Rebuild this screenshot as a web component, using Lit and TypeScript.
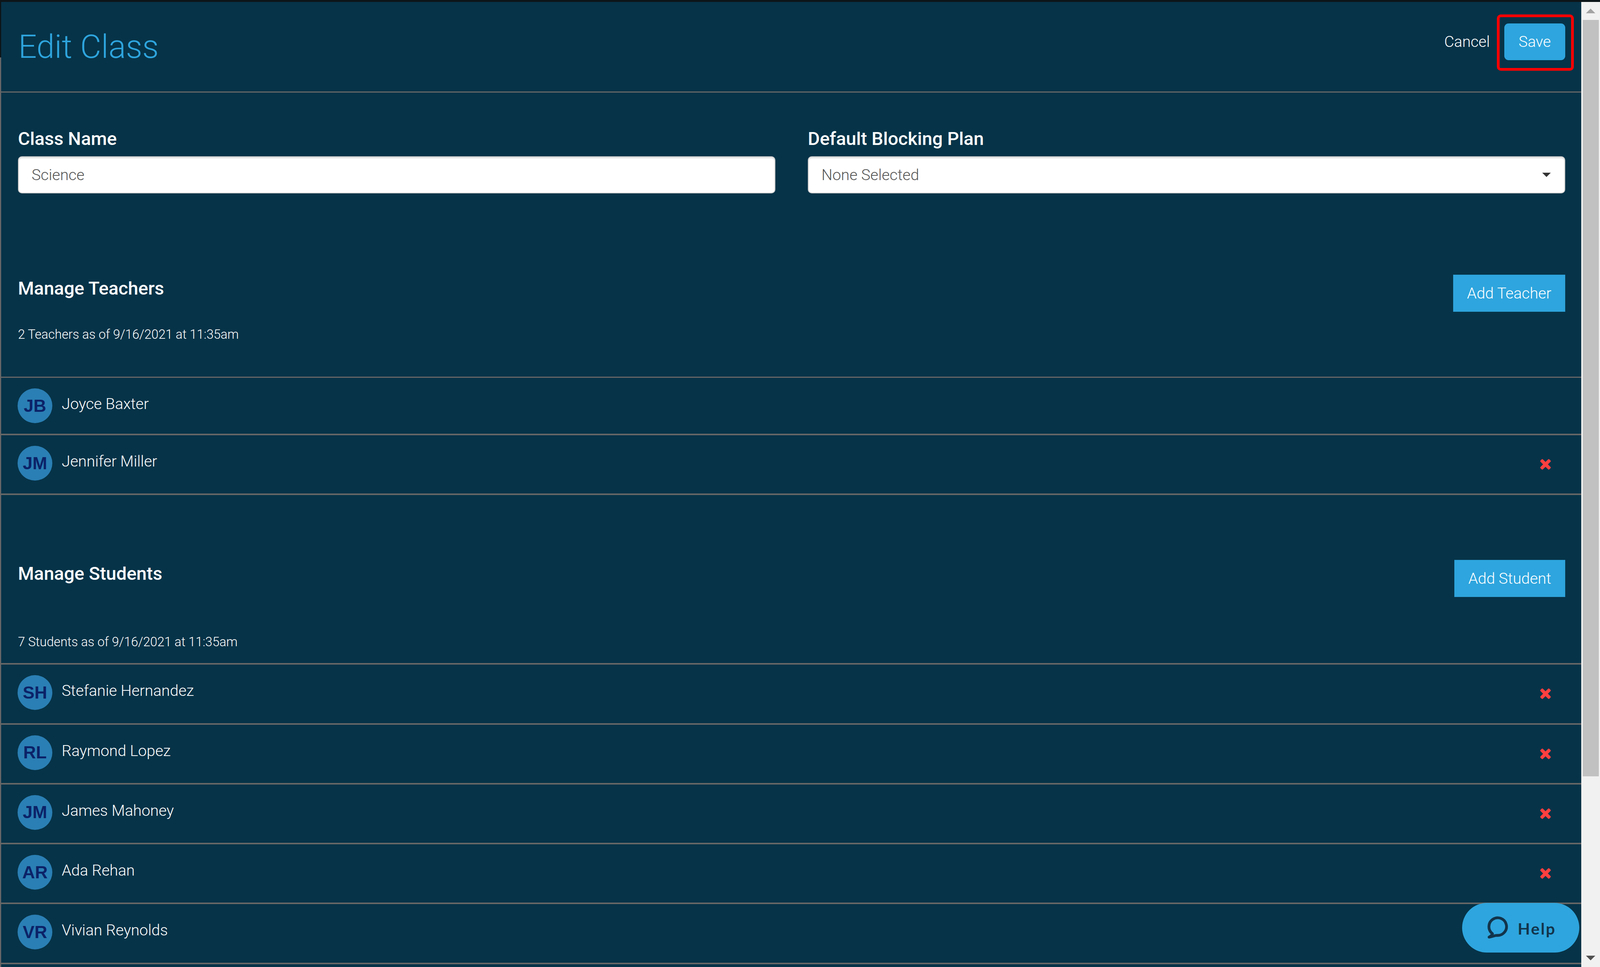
import { LitElement, html, css, svg } from "lit";
import { customElement } from "lit/decorators.js";

const X_PATH = "M1298 1280q0 40-28 68l-136 136q-28 28-68 28t-68-28l-294-294-294 294q-28 28-68 28t-68-28l-136-136q-28-28-28-68t28-68l294-294-294-294q-28-28-28-68t28-68l136-136q28-28 68-28t68 28l294 294 294-294q28-28 68-28t68 28l136 136q28 28 28 68t-28 68l-294 294 294 294q28 28 28 68z";

interface Person { initials: string; name: string; removable: boolean; short?: boolean; }

const TEACHERS: Person[] = [
  { initials: "JB", name: "Joyce Baxter", removable: false, short: true },
  { initials: "JM", name: "Jennifer Miller", removable: true },
];
const STUDENTS: Person[] = [
  { initials: "SH", name: "Stefanie Hernandez", removable: true },
  { initials: "RL", name: "Raymond Lopez", removable: true },
  { initials: "JM", name: "James Mahoney", removable: true },
  { initials: "AR", name: "Ada Rehan", removable: true },
  { initials: "VR", name: "Vivian Reynolds", removable: false },
];

@customElement("app-root")
export class AppRoot extends LitElement {
  static styles = css`
    :host {
      display: block;
      position: relative;
      width: 100vw;
      height: 100vh;
      overflow: hidden;
      background: #063348;
      font-family: Roboto, "Liberation Sans", sans-serif;
      color: #fff;
    }
    .window { display: flex; height: 100%; border-top: 5px solid #0d1519; box-sizing: border-box; }
    .main {
      flex: 1;
      min-width: 0;
      border-left: 3px solid #666;
      position: relative;
      overflow: hidden;
    }
    .edge {
      position: absolute; left: 0; top: 5px; width: 3px; height: 142px; background: #0d1519;
    }
    .head {
      height: 232px;
      box-sizing: border-box;
      border-bottom: 3px solid #666;
      display: flex;
      justify-content: space-between;
      padding: 55px 41px 0 44px;
    }
    h1 { margin: 10px 0 0; font-size: 83px; line-height: 100px; font-weight: 300; color: #2ea5de; }
    .head-actions { display: flex; align-items: center; gap: 37px; height: 94px; }
    .cancel { font-size: 39px; font-weight: 300; }
    .save {
      width: 156px; height: 94px; border-radius: 11px; background: #2ea5de;
      display: flex; align-items: center; justify-content: center;
      font-size: 39px; font-weight: 300;
    }
    .form {
      display: grid;
      grid-template-columns: 1fr 1fr;
      column-gap: 83px;
      padding: 91px 41px 0 43px;
    }
    .field label { display: block; font-size: 47px; line-height: 54px; font-weight: 500; margin-bottom: 18px; }
    .control {
      height: 95px; box-sizing: border-box; background: #fff; border-radius: 10px;
      border: 2px solid #ccc; box-shadow: inset 0 3px 3px rgba(0, 0, 0, 0.12);
      color: #555; font-size: 39.4px; font-weight: 300;
      display: flex; align-items: center; justify-content: space-between;
      padding: 0 35px 0 33px;
    }
    .caret { width: 0; height: 0; border-left: 11px solid transparent; border-right: 11px solid transparent; border-top: 11px solid #333; }
    .section-head {
      display: flex; justify-content: space-between; align-items: flex-start;
      padding: 0 41px 0 43px;
    }
    .teachers { margin-top: 208px; }
    .students { margin-top: 166px; }
    h2 { margin: 8px 0 0; font-size: 47px; line-height: 54px; font-weight: 500; }
    .add {
      height: 95px; box-sizing: border-box; background: #2ea5de; border: 1px solid #2b9bd0;
      display: flex; align-items: center; justify-content: center;
      font-size: 39.4px; font-weight: 300;
    }
    .add-t { width: 287px; }
    .add-s { width: 284px; }
    .count { font-size: 32.6px; line-height: 42px; font-weight: 300; padding-left: 43px; box-sizing: border-box; }
    .teachers .count { margin-top: 37px; height: 132px; border-bottom: 3px solid #666; }
    .students .count { margin-top: 94px; height: 79px; border-bottom: 4px solid #666; }
    .row {
      height: 153.25px; box-sizing: border-box; border-bottom: 4px solid #666;
      display: flex; align-items: flex-start; padding: 27px 41px 0 42px;
    }
    .row.short { height: 147px; }
    .avatar {
      width: 89px; height: 89px; border-radius: 50%; background: #2a7fb4; flex: none;
      display: flex; align-items: center; justify-content: center;
      color: #0b2268; font-family: "Liberation Sans", Arial, sans-serif; font-weight: 700; font-size: 45px;
    }
    .name { font-size: 39.4px; font-weight: 300; line-height: 80px; margin-left: 24px; }
    .remove { width: 27px; height: 27px; margin-left: auto; margin-right: 37px; margin-top: 34px; fill: #ff3f3f; display: block; }
    .scrollbar {
      width: 48px; flex: none; background: #f1f1f1; box-sizing: border-box;
      display: flex; flex-direction: column; align-items: center;
    }
    .arrow-btn { height: 46px; flex: none; display: flex; align-items: center; justify-content: center; width: 100%; }
    .up { width: 0; height: 0; border-left: 12px solid transparent; border-right: 12px solid transparent; border-bottom: 12px solid #a3a3a3; }
    .down { width: 0; height: 0; border-left: 12px solid transparent; border-right: 12px solid transparent; border-top: 12px solid #505050; }
    .thumb { width: 41px; height: 1936px; margin-left: 1px; background: #c1c1c1; flex: none; }
    .spacer { flex: 1; }
    .marker {
      position: absolute; right: 67px; top: 37px; width: 197px; height: 144px; box-sizing: border-box;
      border: 7px solid #ff0000; border-radius: 10px;
    }
    .help {
      position: absolute; right: 53px; top: 2311px; width: 300px; height: 127px; border-radius: 64px;
      background: #2ea5de; color: #12344b; display: flex; align-items: center; justify-content: center; gap: 18px;
      font-family: Lato, "Open Sans", sans-serif; font-weight: 700; font-size: 41px; letter-spacing: 3px;
    }
    .help span { padding-top: 3px; }
    .help svg { width: 65px; height: 65px; display: block; margin-top: -6px; fill: none; stroke: #12344b; stroke-width: 7; stroke-linejoin: round; }
  `;

  private row(p: Person) {
    return html`<div class="row ${p.short ? "short" : ""}">
      <div class="avatar">${p.initials}</div>
      <div class="name">${p.name}</div>
      ${p.removable
        ? svg`<svg class="remove" viewBox="110 324 1188 1188"><path d=${X_PATH}></path></svg>`
        : ""}
    </div>`;
  }

  render() {
    return html`
      <div class="window">
        <div class="main">
          <div class="head">
            <h1>Edit Class</h1>
            <div class="head-actions">
              <span class="cancel">Cancel</span>
              <span class="save">Save</span>
            </div>
          </div>
          <div class="form">
            <div class="field">
              <label>Class Name</label>
              <div class="control">Science</div>
            </div>
            <div class="field">
              <label>Default Blocking Plan</label>
              <div class="control">None Selected<span class="caret"></span></div>
            </div>
          </div>
          <section class="teachers">
            <div class="section-head">
              <h2>Manage Teachers</h2>
              <div class="add add-t">Add Teacher</div>
            </div>
            <div class="count">2 Teachers as of 9/16/2021 at 11:35am</div>
            ${TEACHERS.map((p) => this.row(p))}
          </section>
          <section class="students">
            <div class="section-head">
              <h2>Manage Students</h2>
              <div class="add add-s">Add Student</div>
            </div>
            <div class="count">7 Students as of 9/16/2021 at 11:35am</div>
            ${STUDENTS.map((p) => this.row(p))}
          </section>
        </div>
        <div class="scrollbar">
          <div class="arrow-btn"><span class="up"></span></div>
          <div class="thumb"></div>
          <div class="spacer"></div>
          <div class="arrow-btn"><span class="down"></span></div>
        </div>
      </div>
      <div class="edge"></div>
      <div class="marker"></div>
      <div class="help">
        <svg viewBox="0 0 65 65"><path d="M18.8 50.7A22.5 22.5 0 1 1 30 55C24 55 18 59 10 59.5C14 57 18 54 18.8 50.7Z"></path></svg>
        <span>Help</span>
      </div>
    `;
  }
}
